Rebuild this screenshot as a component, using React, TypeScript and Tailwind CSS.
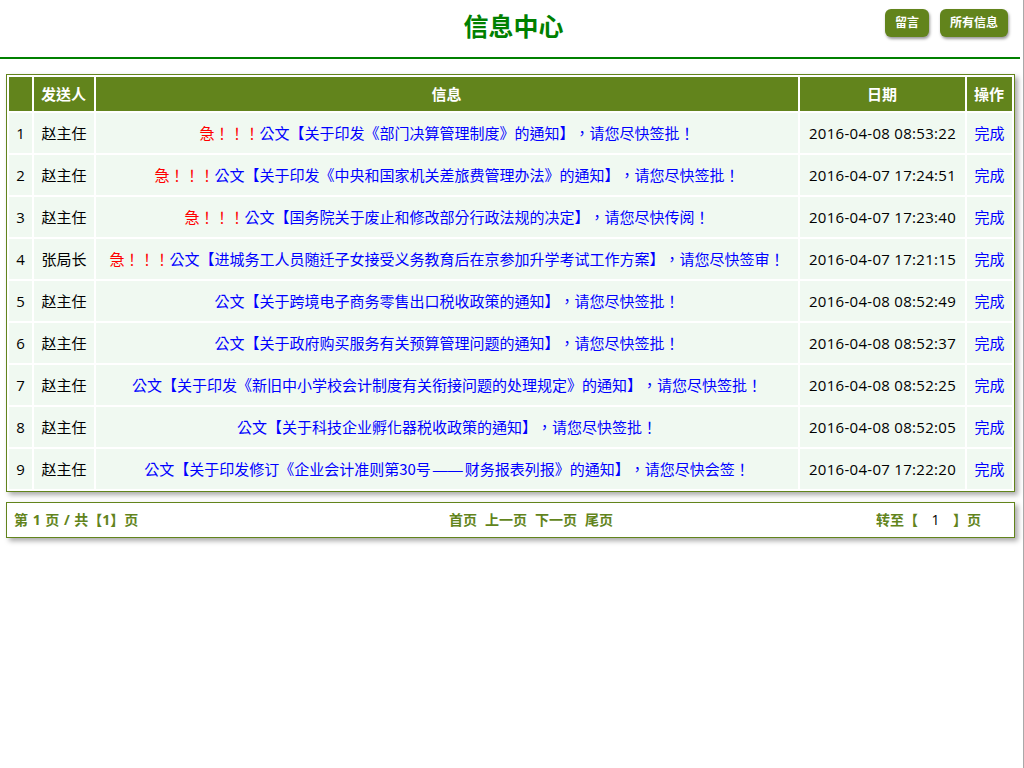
const rows = [
  { n: 1, from: '赵主任', urgent: true, msg: '公文【关于印发《部门决算管理制度》的通知】，请您尽快签批！', date: '2016-04-08 08:53:22' },
  { n: 2, from: '赵主任', urgent: true, msg: '公文【关于印发《中央和国家机关差旅费管理办法》的通知】，请您尽快签批！', date: '2016-04-07 17:24:51' },
  { n: 3, from: '赵主任', urgent: true, msg: '公文【国务院关于废止和修改部分行政法规的决定】，请您尽快传阅！', date: '2016-04-07 17:23:40' },
  { n: 4, from: '张局长', urgent: true, msg: '公文【进城务工人员随迁子女接受义务教育后在京参加升学考试工作方案】，请您尽快签审！', date: '2016-04-07 17:21:15' },
  { n: 5, from: '赵主任', urgent: false, msg: '公文【关于跨境电子商务零售出口税收政策的通知】，请您尽快签批！', date: '2016-04-08 08:52:49' },
  { n: 6, from: '赵主任', urgent: false, msg: '公文【关于政府购买服务有关预算管理问题的通知】，请您尽快签批！', date: '2016-04-08 08:52:37' },
  { n: 7, from: '赵主任', urgent: false, msg: '公文【关于印发《新旧中小学校会计制度有关衔接问题的处理规定》的通知】，请您尽快签批！', date: '2016-04-08 08:52:25' },
  { n: 8, from: '赵主任', urgent: false, msg: '公文【关于科技企业孵化器税收政策的通知】，请您尽快签批！', date: '2016-04-08 08:52:05' },
  { n: 9, from: '赵主任', urgent: false, msg: '公文【关于印发修订《企业会计准则第30号——财务报表列报》的通知】，请您尽快会签！', date: '2016-04-07 17:22:20' },
]

const font = "font-['Open_Sans','Noto_Sans_CJK_TC',sans-serif]"

function TopButton({ label, width }: { label: string; width: string }) {
  return (
    <button
      type="button"
      className={`h-[28px] ${width} rounded-[6px] bg-[#62841c] text-[12px] font-bold text-white shadow-[1px_2px_3px_#999]`}
    >
      {label}
    </button>
  )
}

function Message({ text }: { text: string }) {
  const parts = text.split('——')
  return (
    <span className="text-[#0000ff]">
      {parts[0]}
      {parts.length > 1 && <span className="px-[2px] font-['Liberation_Sans',sans-serif] leading-none">——</span>}
      {parts[1]}
    </span>
  )
}

export default function App() {
  return (
    <div className={`${font} h-[768px] w-[1024px] overflow-hidden border-r border-[#a9a9a9] bg-white text-[15px] text-black [text-spacing-trim:space-all]`}>
      <div className="w-[1020px]">
        <div className="relative h-[59px] border-b-2 border-[#008000]">
          <h1 className="pt-[6px] pl-[7px] text-center text-[25px] leading-[40px] font-bold text-[#008000]">信息中心</h1>
          <div className="absolute top-[9px] right-[12px] flex gap-[11px]">
            <TopButton label="留言" width="w-[44px]" />
            <TopButton label="所有信息" width="w-[68px]" />
          </div>
        </div>

        <div className="mt-[15px] ml-[6px] w-[1009px] border border-[#62841c] shadow-[3px_3px_5px_#aaa]">
          <table className="w-full table-fixed border-separate border-spacing-[2px] text-center">
            <colgroup>
              <col className="w-[23px]" />
              <col className="w-[60px]" />
              <col />
              <col className="w-[165px]" />
              <col className="w-[45px]" />
            </colgroup>
            <thead>
              <tr className="h-[34px] bg-[#62841c] text-white">
                <th></th>
                <th className="pr-[1px]">发送人</th>
                <th className="pr-[1px]">信息</th>
                <th className="pr-[1px]">日期</th>
                <th className="pr-[1px]">操作</th>
              </tr>
            </thead>
            <tbody>
              {rows.map((r) => (
                <tr key={r.n} className="h-[40px] bg-[#f0f9f1]">
                  <td>{r.n}</td>
                  <td>{r.from}</td>
                  <td className="whitespace-nowrap font-['Noto_Sans_CJK_TC',sans-serif]">
                    {r.urgent && <span className="text-[#ff0000]">急！！！</span>}
                    <Message text={r.msg} />
                  </td>
                  <td className="tracking-[0.3px]">{r.date}</td>
                  <td className="text-[#0000ff]">完成</td>
                </tr>
              ))}
            </tbody>
          </table>
        </div>

        <div className="mt-[10px] ml-[6px] flex h-[36px] w-[1009px] items-center border border-[#62841c] pb-[2px] text-[14px] font-bold text-[#62841c] shadow-[3px_3px_5px_#aaa]">
          <div className="w-[340px] pl-[7px] [word-spacing:1px]">第 1 页 / 共【1】页</div>
          <div className="flex w-[368px] justify-center gap-[8px]">
            <span>首页</span>
            <span>上一页</span>
            <span>下一页</span>
            <span>尾页</span>
          </div>
          <div className="flex flex-1 justify-end pr-[33px]">
            转至【
            <span className="w-[35px] text-center font-normal text-black">1</span>
            】页
          </div>
        </div>
      </div>
    </div>
  )
}
